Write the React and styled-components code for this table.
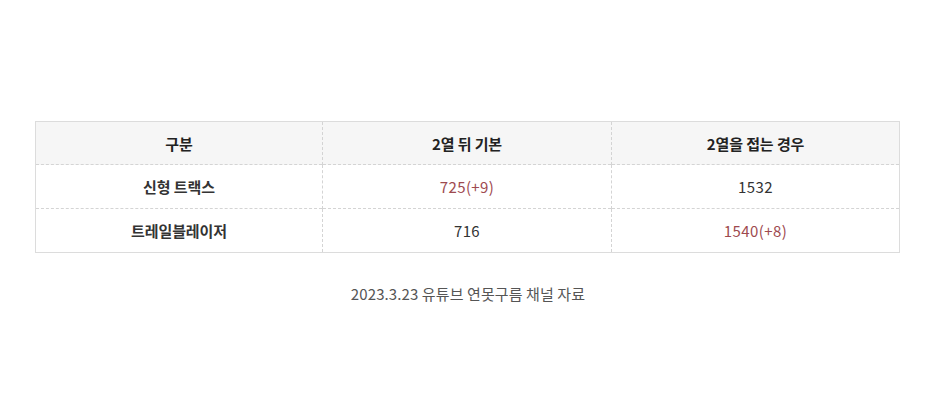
import React from "react";
import styled, { createGlobalStyle } from "styled-components";

const GlobalStyle = createGlobalStyle`
  body {
    margin: 0;
    background: #fff;
    font-family: "Noto Sans CJK KR", "Noto Sans", sans-serif;
  }
`;

const Page = styled.div`
  width: 936px;
  height: 407px;
  padding-top: 121px;
  box-sizing: border-box;
`;

const Table = styled.table`
  width: 864px;
  margin-left: 35px;
  border-collapse: collapse;
  table-layout: fixed;
  border: 1px solid #dcdcdc;
`;

const Cell = styled.td`
  height: 43px;
  padding: 0;
  text-align: center;
  vertical-align: middle;
  font-size: 15px;
  letter-spacing: ${({ $num }) => ($num ? "0.4px" : "-0.1px")};
  color: ${({ $accent }) => ($accent ? "#9e4a4f" : "#333")};
  font-weight: ${({ $bold }) => ($bold ? 600 : 400)};
  border-left: 1px dashed #d4d4d4;
  border-top: 1px dashed #d4d4d4;

  &:first-child {
    border-left: none;
  }
`;

const HeadCell = styled(Cell).attrs({ as: "th" })`
  height: 42px;
  background: #f6f6f6;
  color: #222;
  font-weight: 600;
  border-top: none;
`;

const Caption = styled.p`
  margin: 30px 0 0;
  text-align: center;
  font-size: 15px;
  color: #555;
  letter-spacing: 0.1px;
`;

const rows = [
  { name: "신형 트랙스", a: "725(+9)", aAccent: true, b: "1532" },
  { name: "트레일블레이저", a: "716", b: "1540(+8)", bAccent: true },
];

export default function App() {
  return (
    <Page>
      <GlobalStyle />
      <Table>
        <colgroup>
          <col style={{ width: 287 }} />
          <col style={{ width: 289 }} />
          <col style={{ width: 288 }} />
        </colgroup>
        <thead>
          <tr>
            <HeadCell>구분</HeadCell>
            <HeadCell>2열 뒤 기본</HeadCell>
            <HeadCell>2열을 접는 경우</HeadCell>
          </tr>
        </thead>
        <tbody>
          {rows.map((r) => (
            <tr key={r.name}>
              <Cell $bold>{r.name}</Cell>
              <Cell $num $accent={r.aAccent}>{r.a}</Cell>
              <Cell $num $accent={r.bAccent}>{r.b}</Cell>
            </tr>
          ))}
        </tbody>
      </Table>
      <Caption>2023.3.23 유튜브 연못구름 채널 자료</Caption>
    </Page>
  );
}
